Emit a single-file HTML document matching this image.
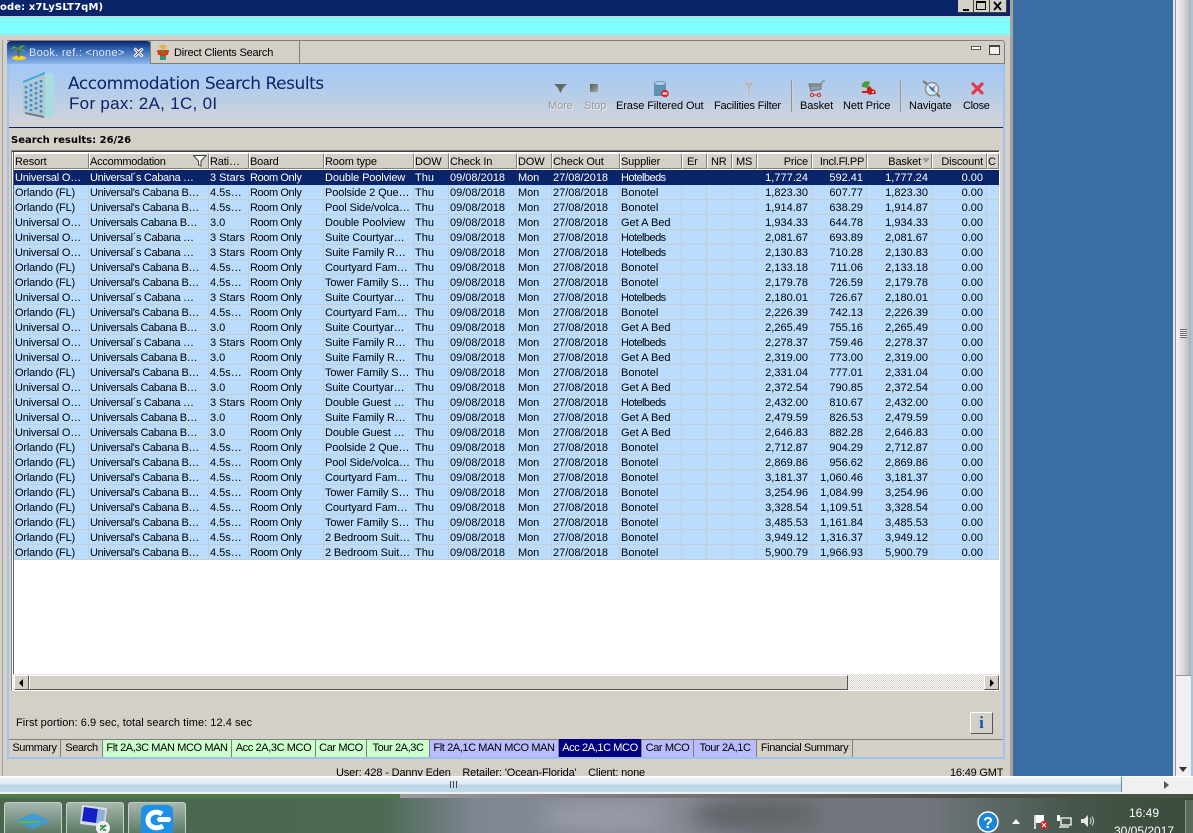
<!DOCTYPE html>
<html><head><meta charset="utf-8"><title>Accommodation Search Results</title>
<style>
html,body{margin:0;padding:0;width:1193px;height:833px;overflow:hidden;background:#d4d0c8}
body{position:relative;font:11px/13px "Liberation Sans",sans-serif;color:#000}
.a{position:absolute}
.t{position:absolute;white-space:nowrap}
#grid{position:absolute;left:14px;top:170px;width:985px;border-collapse:separate;border-spacing:0;table-layout:fixed;font:11px/12px "Liberation Sans",sans-serif}
#grid td{height:12px;padding:2px 2px 0 1px;overflow:hidden;white-space:nowrap;border-right:1px solid #c8cdd2;border-bottom:1px solid #c8cdd2;background:#b9dcff;line-height:12px;box-sizing:content-box;vertical-align:top}
#grid tr.s td{background:#0a2469;color:#fff;border-color:#0a2469}
#grid td.r{text-align:right;padding-right:3px}
#grid td:nth-child(1){letter-spacing:-.2px}
#grid td:nth-child(2){letter-spacing:-.35px}
#grid td:nth-child(4){letter-spacing:-.4px}
#grid td:nth-child(5){letter-spacing:-.12px}
#grid td:nth-child(8){letter-spacing:-.1px}
#grid td.k{letter-spacing:-.55px}
.h{position:absolute;top:153px;height:16px;background:#d4d0c8;border-left:1px solid #fff;border-top:1px solid #fff;border-right:1px solid #808080;border-bottom:1px solid #808080;box-sizing:border-box;padding-left:0;line-height:16px;white-space:nowrap;overflow:hidden;letter-spacing:-.15px}
.h.r{text-align:right;padding-right:3px}
.tb{position:absolute;top:740px;height:17px;line-height:17px;text-align:center;border-right:1px solid #808080;box-sizing:border-box;white-space:nowrap;letter-spacing:-.4px}
.lbl{position:absolute;top:100px;white-space:nowrap;text-align:center;letter-spacing:-.1px}
.dis{color:#9a9a9a;text-shadow:1px 1px 0 #eee}
</style></head><body>
<!-- title bar -->
<div class="a" style="left:0;top:0;width:1010px;height:16px;background:#0a2469"></div>
<div class="t" style="left:0;top:1px;color:#fff;font:bold 10px/13px 'DejaVu Sans',sans-serif;letter-spacing:.12px">ode: x7LySLT7qM)</div>
<div class="a" style="left:958px;top:0;width:16px;height:13px;background:#d4d0c8;border-right:1px solid #404040;border-bottom:1px solid #404040;box-sizing:border-box"><div class="a" style="left:5px;top:9px;width:6px;height:2px;background:#000"></div></div>
<div class="a" style="left:974px;top:0;width:16px;height:13px;background:#d4d0c8;border-right:1px solid #404040;border-bottom:1px solid #404040;box-sizing:border-box"><div class="a" style="left:2px;top:1px;width:10px;height:9px;border:1px solid #000;border-top-width:2px;box-sizing:border-box"></div></div>
<div class="a" style="left:990px;top:0;width:17px;height:13px;background:#d4d0c8;border-right:1px solid #404040;border-bottom:1px solid #404040;box-sizing:border-box"><svg class="a" style="left:3px;top:1px" width="10" height="10"><path d="M1 1L8 9M8 1L1 9" stroke="#000" stroke-width="1.8"/></svg></div>
<div class="a" style="left:0;top:16px;width:1010px;height:1px;background:#d4d0c8"></div>
<div class="a" style="left:0;top:17px;width:1010px;height:18px;background:#80ffff"></div>
<!-- right desktop -->
<div class="a" style="left:1010px;top:0;width:3px;height:776px;background:#a8a49c"></div>
<div class="a" style="left:1013px;top:0;width:160px;height:776px;background:#3a6ea5"></div>
<div class="a" style="left:1173px;top:0;width:3px;height:776px;background:#e8eaec;border-right:1px solid #8a98a4;box-sizing:border-box"></div>
<div class="a" style="left:1176px;top:0;width:15px;height:676px;background:linear-gradient(90deg,#f2f2f2,#d8d8d8 50%,#b0b0b0);border-bottom:1px solid #999;box-sizing:border-box"></div>
<div class="a" style="left:1176px;top:676px;width:15px;height:100px;background:#f0f0f0"></div>
<div class="a" style="left:1191px;top:0;width:2px;height:776px;background:#a9c4dc"></div>
<div class="a" style="left:1180px;top:329px;width:7px;height:9px;background:repeating-linear-gradient(180deg,#666 0 1px,#eee 1px 2px)"></div>
<svg class="a" style="left:1179px;top:767px" width="9" height="6"><path d="M0 0H8L4 5Z" fill="#333"/></svg>
<!-- left rule of window -->
<div class="a" style="left:0;top:40px;width:3px;height:736px;background:#d4d0c8;border-right:1px solid #a0a0a0;box-sizing:border-box"></div>
<!-- tab pane -->
<div class="a" style="left:7px;top:40px;width:998px;height:24px;background:#d4d0c8;border-top:1px solid #808080;border-right:1px solid #808080;border-radius:0 3px 0 0;box-sizing:border-box"></div>
<div class="a" style="left:7px;top:41px;width:144px;height:23px;background:linear-gradient(180deg,#0a2469,#2a5aa6 30%,#8db8ec);border-radius:4px 4px 0 0"></div>
<div class="a" style="left:150px;top:41px;width:150px;height:23px;background:#d4d0c8;border-right:1px solid #808080;border-left:1px solid #808080;box-sizing:border-box"></div>
<div class="a" style="left:151px;top:63px;width:854px;height:1px;background:#808080"></div>
<svg class="a" style="left:10px;top:43px" width="18" height="18"><ellipse cx="9" cy="15" rx="7" ry="2.2" fill="#f4d21a"/><path d="M9 14L8 6" stroke="#7a5a20" stroke-width="1.6"/><path d="M8 6C5 2 2 3 1 7C3 5 5 5 8 6C6 6 4 8 4 10C5 8 7 7 8 6C9 3 13 1 16 4C13 3 11 5 9 6C12 5 15 7 16 10C14 8 11 7 8 6Z" fill="#5fae1a"/></svg>
<div class="t" style="left:29px;top:47px;color:#dce8ff;letter-spacing:.28px">Book. ref.: &lt;none&gt;</div>
<svg class="a" style="left:133px;top:47px" width="11" height="11"><path d="M1.5 1.5L9.5 9.5M9.5 1.5L1.5 9.5" stroke="#fff" stroke-width="3"/><path d="M2 2L9 9M9 2L2 9" stroke="#333" stroke-width=".7"/></svg>
<svg class="a" style="left:155px;top:44px" width="16" height="17"><circle cx="8" cy="3" r="2.6" fill="#e8b060"/><path d="M4 1.6H12V3H4Z" fill="#e0b030"/><path d="M2 6H14L13 11H11V15H5V11H3Z" fill="#d83a1a"/><path d="M5 12H11V16H5Z" fill="#2a9a8a"/><circle cx="8" cy="8" r="1.6" fill="#3a9a30"/></svg>
<div class="t" style="left:174px;top:47px;letter-spacing:-.2px">Direct Clients Search</div>
<div class="a" style="left:971px;top:46px;width:10px;height:4px;border:1px solid #555;background:#fff;box-sizing:border-box"></div>
<div class="a" style="left:989px;top:45px;width:11px;height:10px;border:1px solid #444;border-top-width:2px;background:#f4f2ee;box-sizing:border-box"></div>
<!-- main pane borders -->
<div class="a" style="left:7px;top:64px;width:2px;height:695px;background:#9cc4ee"></div>
<div class="a" style="left:1003px;top:64px;width:2px;height:695px;background:#9cc4ee"></div>
<div class="a" style="left:7px;top:757px;width:998px;height:2px;background:#9cc4ee"></div>
<!-- header band -->
<div class="a" style="left:9px;top:64px;width:994px;height:63px;background:linear-gradient(180deg,#a3c7f5 0%,#b4cde9 45%,#cdd2dc 85%,#d4d2cd 100%)"></div>
<div class="a" style="left:9px;top:127px;width:994px;height:1px;background:#0a2469"></div>
<svg class="a" style="left:21px;top:70px" width="37" height="50"><path d="M2 11L24 2V48L2 42Z" fill="#b5c6cf"/><path d="M24 2L33 5V46L24 48Z" fill="#a8dce0"/><path d="M2 11L24 2V4L2 13Z" fill="#35a8e8"/><path d="M5 16V40M10 14V41M15 12V42M20 10V43" stroke="#2f93d8" stroke-width="2.6" stroke-dasharray="2.5 2.5" fill="none"/><path d="M4 42L23 46V48L4 44Z" fill="#6d7d84"/></svg>
<div class="t" style="left:68px;top:75px;font:17px/19px 'DejaVu Sans',sans-serif;color:#0a2469;letter-spacing:-.45px">Accommodation Search Results</div>
<div class="t" style="left:69px;top:94px;font:17px/19px 'Liberation Sans',sans-serif;color:#0a2469;letter-spacing:.3px">For pax: 2A, 1C, 0I</div>
<!-- toolbar icons -->
<svg class="a" style="left:554px;top:83px" width="13" height="12"><path d="M0 1H13L9 5L6.5 10L4 5Z" fill="#666"/></svg>
<div class="a" style="left:590px;top:84px;width:8px;height:8px;background:linear-gradient(135deg,#555,#aaa)"></div>
<svg class="a" style="left:653px;top:81px" width="17" height="17"><path d="M1 2H13V15H1Z" fill="#5f93b5"/><ellipse cx="7" cy="2.5" rx="6" ry="2" fill="#a8d0e6" stroke="#55809c" stroke-width=".7"/><circle cx="12" cy="12.5" r="3.8" fill="#d8242a"/><rect x="9.8" y="11.6" width="4.4" height="1.8" fill="#fff"/></svg>
<svg class="a" style="left:743px;top:81px" width="12" height="16"><path d="M0 1H12L7.5 7V14L5 15.5V7Z" fill="#b4bcc0" stroke="#d8dde0" stroke-width=".5"/></svg>
<div class="a" style="left:791px;top:80px;width:2px;height:32px;background:linear-gradient(90deg,#777,#eee)"></div>
<div class="a" style="left:900px;top:80px;width:2px;height:32px;background:linear-gradient(90deg,#777,#eee)"></div>
<svg class="a" style="left:808px;top:80px" width="17" height="17"><path d="M1 4H13V9L3 11Z" fill="none" stroke="#777" stroke-width="1.2"/><path d="M3 4V10M5 4V10M7 4V10M9 4V9M11 4V9M1 6H13M13 4L15 1H17" stroke="#777" fill="none"/><circle cx="4" cy="15" r="1.6" fill="none" stroke="#d82020"/><circle cx="11" cy="15" r="1.6" fill="none" stroke="#d82020"/><path d="M5.5 15H9.5" stroke="#d82020"/></svg>
<svg class="a" style="left:859px;top:80px" width="18" height="17"><path d="M3 7C2 2 7 0 11 2L9 8Z" fill="#4e9a3a"/><path d="M3 11H8V8L11 6L13 9L16 10L17 14H13L11 15L8 13H3Z" fill="#d81818"/><circle cx="14" cy="12" r="1" fill="#fff"/></svg>
<svg class="a" style="left:923px;top:80px" width="17" height="18"><circle cx="9" cy="9" r="6.5" fill="#dfe8ee" stroke="#7f8f9c" stroke-width="1.4"/><path d="M5 5L10 8L13 13L8 10Z" fill="#2c72c8"/><path d="M10 8L13 4L11 9Z" fill="#d83030"/><path d="M0 1L4 4M14 14L17 17" stroke="#8a6a40" stroke-width="2"/></svg>
<svg class="a" style="left:971px;top:82px" width="13" height="13"><path d="M2 2L11 11M11 2L2 11" stroke="#e83848" stroke-width="3.2" stroke-linecap="round"/></svg>
<div class="lbl dis" style="left:548px">More</div>
<div class="lbl dis" style="left:584px">Stop</div>
<div class="lbl" style="left:616px">Erase Filtered Out</div>
<div class="lbl" style="left:714px;letter-spacing:-.2px">Facilities Filter</div>
<div class="lbl" style="left:800px">Basket</div>
<div class="lbl" style="left:843px">Nett Price</div>
<div class="lbl" style="left:909px">Navigate</div>
<div class="lbl" style="left:963px;letter-spacing:-.3px">Close</div>
<div class="t" style="left:11px;top:134px;font:bold 10px/13px 'DejaVu Sans',sans-serif">Search results: 26/26</div>
<!-- grid frame -->
<div class="a" style="left:11px;top:150px;width:989px;height:541px;background:#fff;border:1px solid;border-color:#808080 #fff #fff #808080;box-sizing:border-box"></div>
<div class="a" style="left:12px;top:151px;width:987px;height:1px;background:#404040"></div>
<div class="a" style="left:13px;top:152px;width:1px;height:523px;background:#606060"></div>
<!-- header -->
<div class="h" style="left:14px;width:75px">Resort</div>
<div class="h" style="left:89px;width:120px;letter-spacing:-.25px">Accommodation</div>
<svg class="a" style="left:193px;top:155px" width="14" height="12"><path d="M.5 .5H13L8 6V11L5.500 9.500V6Z" fill="#fff" stroke="#444"/></svg>
<div class="h" style="left:209px;width:40px">Rati…</div>
<div class="h" style="left:249px;width:75px">Board</div>
<div class="h" style="left:324px;width:90px">Room type</div>
<div class="h" style="left:414px;width:35px">DOW</div>
<div class="h" style="left:449px;width:68px">Check In</div>
<div class="h" style="left:517px;width:35px">DOW</div>
<div class="h" style="left:552px;width:68px">Check Out</div>
<div class="h" style="left:620px;width:62px">Supplier</div>
<div class="h" style="left:682px;width:25px;padding-left:4px">Er</div>
<div class="h" style="left:707px;width:25px;padding-left:3px">NR</div>
<div class="h" style="left:732px;width:25px;padding-left:3px">MS</div>
<div class="h r" style="left:757px;width:55px">Price</div>
<div class="h r" style="left:812px;width:55px;padding-right:2px;letter-spacing:-.3px">Incl.Fl.PP</div>
<div class="h r" style="left:867px;width:65px;padding-right:10px">Basket</div>
<svg class="a" style="left:922px;top:158px" width="8" height="5"><path d="M0 0H8L4 5Z" fill="#999"/></svg>
<div class="h r" style="left:932px;width:55px">Discount</div>
<div class="h" style="left:987px;width:12px">C</div>
<!-- rows -->
<table id="grid"><colgroup><col style="width:75px"><col style="width:120px"><col style="width:40px"><col style="width:75px"><col style="width:90px"><col style="width:35px"><col style="width:68px"><col style="width:35px"><col style="width:68px"><col style="width:62px"><col style="width:25px"><col style="width:25px"><col style="width:25px"><col style="width:55px"><col style="width:55px"><col style="width:65px"><col style="width:55px"><col style="width:12px"></colgroup>
<tr class="s"><td>Universal O…<td>Universal´s Cabana …<td>3 Stars<td>Room Only<td>Double Poolview<td>Thu<td>09/08/2018<td>Mon<td>27/08/2018<td class="k">Hotelbeds<td><td><td><td class="r">1,777.24<td class="r">592.41<td class="r">1,777.24<td class="r">0.00<td></tr>
<tr><td>Orlando (FL)<td>Universal's Cabana B…<td>4.5s…<td>Room Only<td>Poolside 2 Que…<td>Thu<td>09/08/2018<td>Mon<td>27/08/2018<td>Bonotel<td><td><td><td class="r">1,823.30<td class="r">607.77<td class="r">1,823.30<td class="r">0.00<td></tr>
<tr><td>Orlando (FL)<td>Universal's Cabana B…<td>4.5s…<td>Room Only<td>Pool Side/volca…<td>Thu<td>09/08/2018<td>Mon<td>27/08/2018<td>Bonotel<td><td><td><td class="r">1,914.87<td class="r">638.29<td class="r">1,914.87<td class="r">0.00<td></tr>
<tr><td>Universal O…<td>Universals Cabana B…<td>3.0<td>Room Only<td>Double Poolview<td>Thu<td>09/08/2018<td>Mon<td>27/08/2018<td>Get A Bed<td><td><td><td class="r">1,934.33<td class="r">644.78<td class="r">1,934.33<td class="r">0.00<td></tr>
<tr><td>Universal O…<td>Universal´s Cabana …<td>3 Stars<td>Room Only<td>Suite Courtyar…<td>Thu<td>09/08/2018<td>Mon<td>27/08/2018<td class="k">Hotelbeds<td><td><td><td class="r">2,081.67<td class="r">693.89<td class="r">2,081.67<td class="r">0.00<td></tr>
<tr><td>Universal O…<td>Universal´s Cabana …<td>3 Stars<td>Room Only<td>Suite Family R…<td>Thu<td>09/08/2018<td>Mon<td>27/08/2018<td class="k">Hotelbeds<td><td><td><td class="r">2,130.83<td class="r">710.28<td class="r">2,130.83<td class="r">0.00<td></tr>
<tr><td>Orlando (FL)<td>Universal's Cabana B…<td>4.5s…<td>Room Only<td>Courtyard Fam…<td>Thu<td>09/08/2018<td>Mon<td>27/08/2018<td>Bonotel<td><td><td><td class="r">2,133.18<td class="r">711.06<td class="r">2,133.18<td class="r">0.00<td></tr>
<tr><td>Orlando (FL)<td>Universal's Cabana B…<td>4.5s…<td>Room Only<td>Tower Family S…<td>Thu<td>09/08/2018<td>Mon<td>27/08/2018<td>Bonotel<td><td><td><td class="r">2,179.78<td class="r">726.59<td class="r">2,179.78<td class="r">0.00<td></tr>
<tr><td>Universal O…<td>Universal´s Cabana …<td>3 Stars<td>Room Only<td>Suite Courtyar…<td>Thu<td>09/08/2018<td>Mon<td>27/08/2018<td class="k">Hotelbeds<td><td><td><td class="r">2,180.01<td class="r">726.67<td class="r">2,180.01<td class="r">0.00<td></tr>
<tr><td>Orlando (FL)<td>Universal's Cabana B…<td>4.5s…<td>Room Only<td>Courtyard Fam…<td>Thu<td>09/08/2018<td>Mon<td>27/08/2018<td>Bonotel<td><td><td><td class="r">2,226.39<td class="r">742.13<td class="r">2,226.39<td class="r">0.00<td></tr>
<tr><td>Universal O…<td>Universals Cabana B…<td>3.0<td>Room Only<td>Suite Courtyar…<td>Thu<td>09/08/2018<td>Mon<td>27/08/2018<td>Get A Bed<td><td><td><td class="r">2,265.49<td class="r">755.16<td class="r">2,265.49<td class="r">0.00<td></tr>
<tr><td>Universal O…<td>Universal´s Cabana …<td>3 Stars<td>Room Only<td>Suite Family R…<td>Thu<td>09/08/2018<td>Mon<td>27/08/2018<td class="k">Hotelbeds<td><td><td><td class="r">2,278.37<td class="r">759.46<td class="r">2,278.37<td class="r">0.00<td></tr>
<tr><td>Universal O…<td>Universals Cabana B…<td>3.0<td>Room Only<td>Suite Family R…<td>Thu<td>09/08/2018<td>Mon<td>27/08/2018<td>Get A Bed<td><td><td><td class="r">2,319.00<td class="r">773.00<td class="r">2,319.00<td class="r">0.00<td></tr>
<tr><td>Orlando (FL)<td>Universal's Cabana B…<td>4.5s…<td>Room Only<td>Tower Family S…<td>Thu<td>09/08/2018<td>Mon<td>27/08/2018<td>Bonotel<td><td><td><td class="r">2,331.04<td class="r">777.01<td class="r">2,331.04<td class="r">0.00<td></tr>
<tr><td>Universal O…<td>Universals Cabana B…<td>3.0<td>Room Only<td>Suite Courtyar…<td>Thu<td>09/08/2018<td>Mon<td>27/08/2018<td>Get A Bed<td><td><td><td class="r">2,372.54<td class="r">790.85<td class="r">2,372.54<td class="r">0.00<td></tr>
<tr><td>Universal O…<td>Universal´s Cabana …<td>3 Stars<td>Room Only<td>Double Guest …<td>Thu<td>09/08/2018<td>Mon<td>27/08/2018<td class="k">Hotelbeds<td><td><td><td class="r">2,432.00<td class="r">810.67<td class="r">2,432.00<td class="r">0.00<td></tr>
<tr><td>Universal O…<td>Universals Cabana B…<td>3.0<td>Room Only<td>Suite Family R…<td>Thu<td>09/08/2018<td>Mon<td>27/08/2018<td>Get A Bed<td><td><td><td class="r">2,479.59<td class="r">826.53<td class="r">2,479.59<td class="r">0.00<td></tr>
<tr><td>Universal O…<td>Universals Cabana B…<td>3.0<td>Room Only<td>Double Guest …<td>Thu<td>09/08/2018<td>Mon<td>27/08/2018<td>Get A Bed<td><td><td><td class="r">2,646.83<td class="r">882.28<td class="r">2,646.83<td class="r">0.00<td></tr>
<tr><td>Orlando (FL)<td>Universal's Cabana B…<td>4.5s…<td>Room Only<td>Poolside 2 Que…<td>Thu<td>09/08/2018<td>Mon<td>27/08/2018<td>Bonotel<td><td><td><td class="r">2,712.87<td class="r">904.29<td class="r">2,712.87<td class="r">0.00<td></tr>
<tr><td>Orlando (FL)<td>Universal's Cabana B…<td>4.5s…<td>Room Only<td>Pool Side/volca…<td>Thu<td>09/08/2018<td>Mon<td>27/08/2018<td>Bonotel<td><td><td><td class="r">2,869.86<td class="r">956.62<td class="r">2,869.86<td class="r">0.00<td></tr>
<tr><td>Orlando (FL)<td>Universal's Cabana B…<td>4.5s…<td>Room Only<td>Courtyard Fam…<td>Thu<td>09/08/2018<td>Mon<td>27/08/2018<td>Bonotel<td><td><td><td class="r">3,181.37<td class="r">1,060.46<td class="r">3,181.37<td class="r">0.00<td></tr>
<tr><td>Orlando (FL)<td>Universal's Cabana B…<td>4.5s…<td>Room Only<td>Tower Family S…<td>Thu<td>09/08/2018<td>Mon<td>27/08/2018<td>Bonotel<td><td><td><td class="r">3,254.96<td class="r">1,084.99<td class="r">3,254.96<td class="r">0.00<td></tr>
<tr><td>Orlando (FL)<td>Universal's Cabana B…<td>4.5s…<td>Room Only<td>Courtyard Fam…<td>Thu<td>09/08/2018<td>Mon<td>27/08/2018<td>Bonotel<td><td><td><td class="r">3,328.54<td class="r">1,109.51<td class="r">3,328.54<td class="r">0.00<td></tr>
<tr><td>Orlando (FL)<td>Universal's Cabana B…<td>4.5s…<td>Room Only<td>Tower Family S…<td>Thu<td>09/08/2018<td>Mon<td>27/08/2018<td>Bonotel<td><td><td><td class="r">3,485.53<td class="r">1,161.84<td class="r">3,485.53<td class="r">0.00<td></tr>
<tr><td>Orlando (FL)<td>Universal's Cabana B…<td>4.5s…<td>Room Only<td>2 Bedroom Suit…<td>Thu<td>09/08/2018<td>Mon<td>27/08/2018<td>Bonotel<td><td><td><td class="r">3,949.12<td class="r">1,316.37<td class="r">3,949.12<td class="r">0.00<td></tr>
<tr><td>Orlando (FL)<td>Universal's Cabana B…<td>4.5s…<td>Room Only<td>2 Bedroom Suit…<td>Thu<td>09/08/2018<td>Mon<td>27/08/2018<td>Bonotel<td><td><td><td class="r">5,900.79<td class="r">1,966.93<td class="r">5,900.79<td class="r">0.00<td></tr>
</table>
<!-- h scroll -->
<div class="a" style="left:13px;top:674px;width:986px;height:16px;background:repeating-conic-gradient(#fff 0 25%,#d4d0c8 0 50%) 0 0/2px 2px"></div>
<div class="a" style="left:14px;top:675px;width:15px;height:15px;background:#d4d0c8;border:1px solid;border-color:#fff #555 #555 #fff;box-sizing:border-box"><svg class="a" style="left:4px;top:3px" width="5" height="8"><path d="M4 0V8L0 4Z" fill="#000"/></svg></div>
<div class="a" style="left:29px;top:675px;width:819px;height:15px;background:#d4d0c8;border:1px solid;border-color:#fff #555 #555 #fff;box-sizing:border-box"></div>
<div class="a" style="left:984px;top:675px;width:15px;height:15px;background:#d4d0c8;border:1px solid;border-color:#fff #555 #555 #fff;box-sizing:border-box"><svg class="a" style="left:5px;top:3px" width="5" height="8"><path d="M0 0V8L4 4Z" fill="#000"/></svg></div>
<!-- status -->
<div class="t" style="left:16px;top:717px;letter-spacing:.04px">First portion: 6.9 sec, total search time: 12.4 sec</div>
<div class="a" style="left:970px;top:712px;width:23px;height:22px;background:#d4d0c8;border:1px solid;border-color:#fff #555 #555 #fff;box-sizing:border-box;text-align:center;font:bold 17px/20px 'Liberation Serif',serif;color:#0a5aa8">i</div>
<!-- bottom tabs -->
<div class="a" style="left:9px;top:739px;width:994px;height:1px;background:#808080"></div>
<div class="tb" style="left:9px;width:52px">Summary</div>
<div class="tb" style="left:61px;width:42px">Search</div>
<div class="tb" style="left:103px;width:129px;background:#ccffcc">Flt 2A,3C MAN MCO MAN</div>
<div class="tb" style="left:232px;width:84px;background:#ccffcc">Acc 2A,3C MCO</div>
<div class="tb" style="left:316px;width:51px;background:#ccffcc">Car MCO</div>
<div class="tb" style="left:367px;width:63px;background:#ccffcc">Tour 2A,3C</div>
<div class="tb" style="left:430px;width:129px;background:#bbbbff">Flt 2A,1C MAN MCO MAN</div>
<div class="tb" style="left:559px;width:83px;top:739px;height:18px;line-height:18px;background:#000080;color:#fff">Acc 2A,1C MCO</div>
<div class="tb" style="left:642px;width:52px;background:#bbbbff">Car MCO</div>
<div class="tb" style="left:694px;width:63px;background:#bbbbff">Tour 2A,1C</div>
<div class="tb" style="left:757px;width:96px">Financial Summary</div>
<div class="t" style="left:336px;top:766px;letter-spacing:-.15px;height:10px;overflow:hidden;line-height:14px">User: 428 - Danny Eden &nbsp;&nbsp;&nbsp;Retailer: 'Ocean-Florida' &nbsp;&nbsp;&nbsp;Client: none</div>
<div class="t" style="left:950px;top:766px;letter-spacing:-.2px;height:10px;overflow:hidden;line-height:14px">16:49 GMT</div>
<!-- outer h scrollbar -->
<div class="a" style="left:0;top:776px;width:1193px;height:18px;background:#f0f0f0;border-top:1px solid #fff;box-sizing:border-box"></div>
<div class="a" style="left:0;top:777px;width:1122px;height:15px;background:linear-gradient(180deg,#eef6fa,#dcecf4 45%,#b9d6e6 55%,#c2dbe8);border-right:1px solid #6a8aa0;box-sizing:border-box"></div>
<div class="a" style="left:450px;top:781px;width:8px;height:7px;background:repeating-linear-gradient(90deg,#446 0 1px,#cde 1px 3px)"></div>
<svg class="a" style="left:1164px;top:781px" width="6" height="9"><path d="M0 0V8L5 4Z" fill="#555"/></svg>
<!-- taskbar -->
<div class="a" style="left:0;top:794px;width:1193px;height:39px;overflow:hidden;background:linear-gradient(90deg,#49664d 0,#4c6a54 32%,#7e8693 40%,#8a8f9a 55%,#73777d 68%,#70757c 78%,#45574a 90%,#3a4a3c 100%)">
<div class="a" style="left:690px;top:4px;width:130px;height:34px;border-radius:50%;background:#606468;filter:blur(10px)"></div>
<div class="a" style="left:540px;top:10px;width:120px;height:25px;border-radius:50%;background:#9a9ea8;filter:blur(10px)"></div>
</div>
<div class="a" style="left:0;top:794px;width:400px;height:4px;background:#4f7a48"></div>
<div class="a" style="left:400px;top:794px;width:793px;height:4px;background:linear-gradient(90deg,#9b9aa0,#4e5048 70%,#44543e)"></div>
<div class="a" style="left:4px;top:802px;width:58px;height:31px;background:linear-gradient(180deg,#a6b8ae,#5d7a66);border:1px solid #c5d0c8;border-bottom:0;border-radius:3px 3px 0 0;box-sizing:border-box"></div>
<div class="a" style="left:66px;top:802px;width:58px;height:31px;background:linear-gradient(180deg,#a6b8ae,#5d7a66);border:1px solid #c5d0c8;border-bottom:0;border-radius:3px 3px 0 0;box-sizing:border-box"></div>
<div class="a" style="left:128px;top:802px;width:58px;height:31px;background:linear-gradient(180deg,#a6b8ae,#5d7a66);border:1px solid #c5d0c8;border-bottom:0;border-radius:3px 3px 0 0;box-sizing:border-box"></div>
<svg class="a" style="left:16px;top:813px" width="34" height="16"><path d="M0 8L17 0L34 8L17 16Z" fill="#3f9ad8"/><path d="M2 8H28L18 10H4Z" fill="#6cb82a"/></svg>
<svg class="a" style="left:79px;top:802px" width="34" height="31"><path d="M3 3L28 6L26 25L1 22Z" fill="#d8dde2"/><path d="M5 5L19 7L17 21L3 19Z" fill="#1420c8"/><path d="M19 7L26 8L25 22L17 21Z" fill="#8eb0d8"/><circle cx="24" cy="26" r="7" fill="#eee"/><path d="M21 28L27 23M21 24H24M24 28H27" stroke="#1a8a2a" stroke-width="1.6"/></svg>
<svg class="a" style="left:141px;top:805px" width="32" height="28"><rect x="0" y="0" width="32" height="34" rx="6" fill="#1c90e4"/><path d="M21 9C15 5 7 8 7 15C7 22 15 25 22 21" fill="none" stroke="#fff" stroke-width="5"/><rect x="16" y="12" width="14" height="5" rx="2.500" fill="#fff"/></svg>
<svg class="a" style="left:977px;top:811px" width="22" height="22"><circle cx="11" cy="11" r="10" fill="#1c86d8" stroke="#fff" stroke-width="1.500"/><text x="11" y="17" text-anchor="middle" font-family="Liberation Sans" font-weight="bold" font-size="16" fill="#fff">?</text></svg>
<svg class="a" style="left:1012px;top:819px" width="8" height="5"><path d="M0 5H8L4 0Z" fill="#fff"/></svg>
<svg class="a" style="left:1033px;top:814px" width="16" height="16"><path d="M2 1V15" stroke="#fff" stroke-width="1.500"/><path d="M3 1H11V9H3Z" fill="#fff"/><circle cx="11" cy="11" r="4" fill="#d82020"/><path d="M9 9L13 13M13 9L9 13" stroke="#fff"/></svg>
<svg class="a" style="left:1056px;top:814px" width="16" height="15"><path d="M5 4H15V11H5ZM3 13H13" fill="none" stroke="#fff" stroke-width="1.300"/><rect x="1" y="1" width="3" height="6" fill="#fff"/></svg>
<svg class="a" style="left:1081px;top:814px" width="15" height="14"><path d="M0 5H3L7 1V13L3 9H0Z" fill="#e6e6e6"/><path d="M9 4Q11 7 9 10M11 2.500Q14 7 11 11.500" stroke="#ddd" fill="none"/></svg>
<div class="t" style="left:1129px;top:806px;color:#fff;font-size:12px;line-height:14px">16:49</div>
<div class="t" style="left:1114px;top:824px;color:#fff;font-size:12px;line-height:14px">30/05/2017</div>
<div class="a" style="left:1185px;top:800px;width:8px;height:33px;background:#5a6a5c;border-left:1px solid #8a9a8c;box-sizing:border-box"></div>
</body></html>
